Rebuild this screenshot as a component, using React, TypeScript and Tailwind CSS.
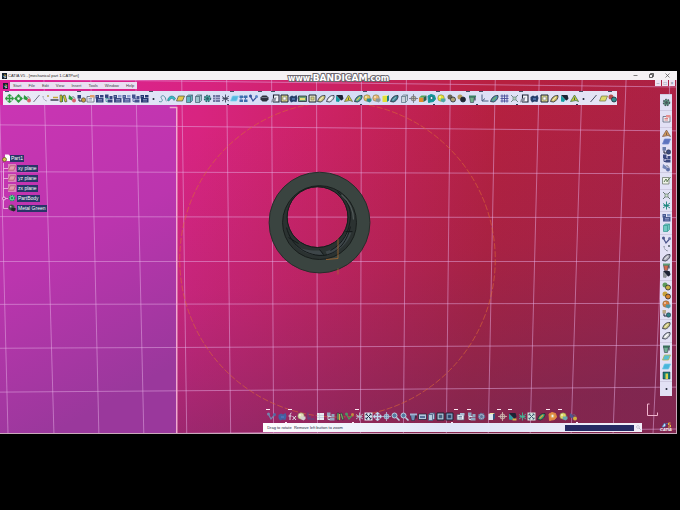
import type { ReactNode } from "react";
import clsx from "clsx";

type Shape =
  | "move" | "orbit" | "cone" | "line" | "curve" | "dash" | "books" | "link" | "sheet"
  | "blocks" | "tree" | "point" | "spline" | "arc" | "plane" | "box" | "gear" | "star"
  | "tiles" | "vee" | "hex" | "pad" | "frame" | "blob" | "photo" | "leaf" | "flip"
  | "tri" | "ball" | "cyl" | "sun" | "cube" | "ring" | "parts" | "cup" | "axes" | "grid"
  | "cross" | "fit" | "lens" | "fx" | "door" | "list" | "sketch";

type Tool = [shape: Shape, a?: string, b?: string];
type ToolGroup = { size: string; tools: Tool[]; mark?: boolean; drop?: boolean };

const INK = "#1d2334";
const NAVY = "#303f78";
const TEAL = "#169ba0";
const GREEN = "#2c9a3f";

const draw = (shape: Shape, a: string, b: string): ReactNode => {
  switch (shape) {
    case "move":
      return <path d="M9 0l4 4h-3v4h4V5l4 4-4 4v-3h-4v4h3l-4 4-4-4h3v-4H4v3L0 9l4-4v3h4V4H5z" fill={a} stroke={a} />;
    case "orbit":
      return <><path d="M9 0l5 5H4zM9 18l5-5H4zM0 9l5-5v10zM18 9l-5-5v10z" fill={a} /><circle cx="9" cy="9" r="4" fill="#eef6ee" stroke={a} strokeWidth="2.5" /></>;
    case "cone":
      return <><path d="M2 2l8 6-2 5-7-3z" fill={a} /><circle cx="12" cy="13" r="4" fill={b} /><path d="M9 4l5 5" stroke="#6b7280" strokeWidth="2" /></>;
    case "line":
      return <path d="M3 16L15 2" stroke={a} strokeWidth="2" />;
    case "curve":
      return <><path d="M4 4c0 6 4 10 9 10" fill="none" stroke={a} strokeWidth="1.5" strokeDasharray="3 2" /><circle cx="14" cy="4" r="2" fill={b} /></>;
    case "dash":
      return <><path d="M1 12h16" stroke={INK} strokeWidth="2.5" /><path d="M6 7h10" stroke={a} strokeWidth="3" /></>;
    case "books":
      return <><path d="M2 2h4v14H2zM8 3l4-1 4 13-4 1z" fill={a} stroke={INK} /><path d="M6 4h2v12H6z" fill={b} /></>;
    case "link":
      return <><rect x="1" y="2" width="7" height="7" fill={a} /><circle cx="13" cy="12" r="4.5" fill={b} stroke={INK} /><path d="M4 9v5h5" fill="none" stroke={INK} strokeWidth="2" /></>;
    case "sheet":
      return <><path d="M2 5h14v11H2z" fill="#eef0f6" stroke="#555d74" strokeWidth="1.5" /><path d="M8 2h9v5H8z" fill={a} /><path d="M5 9h7M5 12h7" stroke={b} strokeWidth="1.5" /></>;
    case "blocks":
      return <><path d="M1 2h7v7H1zM2 8h15v9H2z" fill={a} /><path d="M10 2h7v5h-7z" fill={b} /><path d="M6 11h8M6 14h8M3 5h3" stroke="#aab4de" strokeWidth="1.2" /></>;
    case "tree":
      return <><path d="M2 1h7v7H2zM11 4h6v6h-6zM7 11h10v6H7z" fill={a} /><path d="M4 7v8h4M4 9h7" fill="none" stroke={b} strokeWidth="2" /></>;
    case "point":
      return <circle cx="9" cy="10" r="2" fill={a} />;
    case "spline":
      return <path d="M2 15c7 2 8-2 5-6s2-8 6-4 1 8 4 9" fill="none" stroke={a} strokeWidth="2" />;
    case "arc":
      return <path d="M1 13C3 3 12 1 17 9l-3 4c-3-6-7-5-10 1z" fill={a} stroke="#25606f" />;
    case "plane":
      return <path d="M5 4h12l-4 10H1z" fill={a} stroke={b} strokeWidth="1.5" />;
    case "box":
      return <><path d="M3 5l4-3h8v11l-4 4H3z" fill={a} stroke={b} strokeWidth="1.5" /><path d="M3 5h8v12M11 5l4-3" fill="none" stroke={b} strokeWidth="1.5" /></>;
    case "gear":
      return <><circle cx="9" cy="9" r="6" fill={a} stroke={b} strokeWidth="3" strokeDasharray="3 2" /><circle cx="9" cy="9" r="3" fill={b} /></>;
    case "star":
      return <path d="M9 1v16M2 5l14 9M16 4L2 14M3 9h12" stroke={a} strokeWidth="1.8" />;
    case "tiles":
      return <><path d="M1 3h7v5H1zM10 3h7v5h-7zM1 11h7v5H1zM10 11h7v5h-7z" fill={a} /><path d="M4 8v3M13 8v3M8 6h2" stroke={b} strokeWidth="2" /></>;
    case "vee":
      return <><path d="M2 3l6 11 8-9" fill="none" stroke={a} strokeWidth="2.5" /><circle cx="3" cy="4" r="3" fill={a} /><circle cx="15" cy="5" r="3" fill={b} /></>;
    case "hex":
      return <><path d="M1 7l4-4h8l4 4v4l-4 4H5l-4-4z" fill={a} /><path d="M3 7h12" stroke={b} strokeWidth="1.5" /></>;
    case "pad":
      return <><path d="M5 2h11v14H5z" fill="#f4f5fa" stroke={INK} strokeWidth="2.2" /><path d="M0 17l2-7 9-4-2 8z" fill={a} /></>;
    case "frame":
      return <><path d="M2 2h14v14H2z" fill={a} stroke={INK} strokeWidth="2" /><path d="M6 6h6v6H6z" fill={b} stroke="#5c6058" /></>;
    case "blob":
      return <><path d="M1 6l5-3 4 2 5-3 2 6-2 8-6-1-5 2-3-5z" fill={a} /><path d="M6 8h6v4H6z" fill={b} /></>;
    case "photo":
      return <><path d="M1 4h16v11H1z" fill={a} stroke={INK} strokeWidth="1.5" /><path d="M4 8h10v4H4z" fill={b} /></>;
    case "leaf":
      return <><path d="M1 15C3 8 8 2 16 3c1 5-3 11-9 13z" fill={a} stroke={INK} strokeWidth="1.5" /><path d="M5 13l7-7" stroke={b} strokeWidth="2.5" /></>;
    case "flip":
      return <><path d="M2 2h13l2 7-4 5z" fill={INK} /><path d="M2 3l9 9-3 4-6-1z" fill={a} /><path d="M9 13h8v4H9z" fill={b} /></>;
    case "tri":
      return <><path d="M1 15L9 2l8 13-5-2z" fill={a} stroke={b} strokeWidth="1.5" /><path d="M9 7v5" stroke={b} strokeWidth="2" /></>;
    case "ball":
      return <><circle cx="8" cy="8" r="6.5" fill={a} stroke="#6b6b4a" /><path d="M8 9h9v5l-4 3-6-3z" fill={b} /><circle cx="6" cy="6" r="2" fill="#fff" opacity=".6" /></>;
    case "cyl":
      return <><path d="M3 4h9v12H3z" fill={a} /><path d="M12 4l4-2v11l-4 3z" fill={b} /><path d="M3 4l4-2h9l-4 2z" fill="#f4eda0" /></>;
    case "sun":
      return <><circle cx="9" cy="9" r="5" fill={a} stroke={b} strokeWidth="1.5" /><path d="M9 0v18M0 9h18" stroke={b} strokeWidth="1.5" /></>;
    case "cube":
      return <><path d="M2 7h9v9H2z" fill={a} /><path d="M2 7l5-4h10l-6 4z" fill="#4ea857" /><path d="M11 7l6-4v9l-6 4z" fill={b} /></>;
    case "ring":
      return <><path d="M2 4l6-3 7 2 2 7-4 5-6 1-4 1z" fill={a} stroke={a} strokeWidth="2" /><circle cx="9" cy="8" r="3" fill="#e8eefb" stroke={b} strokeWidth="1.5" /></>;
    case "parts":
      return <><circle cx="6" cy="6" r="5" fill={a} /><circle cx="12" cy="11" r="5" fill={b} stroke={INK} strokeWidth="1.5" /></>;
    case "cup":
      return <><path d="M3 6h10l-2 11H5z" fill={a} stroke={INK} /><path d="M2 3h14v4H2z" fill={b} /><path d="M14 7v6" stroke={INK} strokeWidth="2" /></>;
    case "axes":
      return <path d="M4 1v13h13M4 14l6-5" fill="none" stroke={a} strokeWidth="2" />;
    case "grid":
      return <path d="M1 4h16M1 9h16M1 14h16M4 1v16M9 1v16M14 1v16" stroke={a} strokeWidth="1.8" />;
    case "cross":
      return <><path d="M2 2l14 14M16 2L2 16" stroke={a} strokeWidth="1.5" /><path d="M6 6h6v6H6z" fill={b} stroke={a} /></>;
    case "fit":
      return <><path d="M1 1h16v16H1z" fill={a} /><path d="M4 4l10 10M14 4L4 14M4 7V4h3M11 4h3v3M14 11v3h-3M7 14H4v-3" fill="none" stroke={b} strokeWidth="2" /></>;
    case "lens":
      return <><circle cx="7" cy="7" r="5" fill={b} stroke={a} strokeWidth="2" /><path d="M11 11l6 6" stroke={a} strokeWidth="3" /></>;
    case "fx":
      return <path d="M7 2C4 2 4 5 4 16M1 8h6M9 8l7 8M16 8l-7 8" fill="none" stroke={a} strokeWidth="2" />;
    case "door":
      return <><path d="M2 2h14v14H2z" fill={a} stroke={INK} /><path d="M7 5h5v11H7z" fill={b} /></>;
    case "list":
      return <><path d="M2 2h14v14H2z" fill={a} /><path d="M2 7h14M2 11h14M7 2v14" stroke={b} strokeWidth="1.5" /></>;
    case "sketch":
      return <><path d="M1 3h13v13H1z" fill="#eef3e8" stroke={b} strokeWidth="1.5" /><path d="M4 12l4-6 3 5M9 12l8-10" fill="none" stroke={a} strokeWidth="2" /></>;
  }
};

const Icon = ({ tool: [shape, a = NAVY, b = "#8fa3d8"], className = "size-[9px]" }: { tool: Tool; className?: string }) => (
  <svg viewBox="0 0 18 18" className={className} aria-hidden="true">
    {draw(shape, a, b)}
  </svg>
);

const topGroups: ToolGroup[] = [
  { size: "flex-[71]", tools: [["move", GREEN], ["orbit", GREEN], ["cone", GREEN, "#d9626c"], ["line", "#6f6f86"], ["curve", "#77778c", "#b9a04b"], ["dash", "#c9a93c"], ["books", "#d6d431", "#3b8a46"], ["cone", GREEN, "#d9626c"]] },
  { size: "flex-[72]", tools: [["link", NAVY, "#c59a3e"], ["sheet", "#e0a070", "#7a86a8"], ["blocks", "#33427e", "#33427e"], ["tree", "#33427e", "#5fa3a8"], ["blocks", "#3a4a80", "#8f9fd0"], ["blocks", "#4d5c96", "#8f9fd0"], ["tree", "#43528e", "#5b6aa5"], ["blocks", "#24376f", "#24376f"]] },
  { size: "flex-[81]", drop: true, tools: [["point", INK], ["spline", "#5b93a3"], ["arc", "#35bcc4"], ["plane", "#e3c64b", "#4c5a4a"], ["box", "#5fb5c0", "#4a6577"], ["box", "#9fc5cc", "#4a6577"], ["gear", "#4fb0a6", "#2e5f6c"], ["list", "#7077a0", "#b8bde0"], ["star", "#3f465e"]] },
  { size: "flex-[28]", tools: [["plane", "#55b9e0", "#7fd0ee"], ["tiles", "#3e6fae", "#3e6fae"], ["vee", "#34509a", "#5f87c9"]] },
  { size: "flex-[13]", tools: [["hex", "#2d323f", "#8b93a5"]] },
  { size: "flex-[92]", drop: true, tools: [["pad", "#8d91a0"], ["frame", "#d5d18a", "#fff"], ["blob", "#27406c", "#4c6fa5"], ["photo", "#6da276", "#e6df7a"], ["frame", "#e4e3bd", "#d6d37e"], ["leaf", "#c8c17a", "#eeeab5"], ["leaf", "#d3d6dc", "#fff"], ["flip", TEAL, "#dfe3f7"], ["tri", "#d9cf3c", "#5d6d45"], ["leaf", "#3fa39a", "#d5c860"]] },
  { size: "flex-[74]", drop: true, tools: [["ball", "#e2c25d", "#2b8d8e"], ["ball", "#e7b770", "#8a9a9c"], ["cyl", "#dfe03a", "#1e7f87"], ["leaf", "#3b7f90", "#7fb1bb"], ["box", "#c9d5df", "#5e7486"], ["sun", "#c0bfa5", "#6c6c76"], ["cube", "#e28d2b", "#2f5f4b"], ["ring", "#129497", "#0f5c62"]] },
  { size: "flex-[30]", tools: [["ball", "#e6e334", "#4fa6a2"], ["parts", "#6b6550", "#b0a577"], ["parts", "#b49a5c", "#232733"]] },
  { size: "flex-[13]", drop: true, tools: [["cup", "#73b08a", "#3a7f62"]] },
  { size: "flex-[40]", drop: true, tools: [["axes", "#4a5f80"], ["leaf", "#4f96ad", "#76b26a"], ["grid", "#4a4f9a"], ["cross", "#4e6a62", "#b5cfc0"]] },
  { size: "flex-[60]", drop: true, tools: [["pad", "#8d91a0"], ["blob", "#27406c", "#4c6fa5"], ["frame", "#d5d18a", "#fff"], ["leaf", "#c8b35a", "#eeeab5"], ["flip", TEAL, "#dfe3f7"], ["tri", "#c9cf3c", "#3f6d45"]] },
  { size: "flex-[29]", tools: [["point", INK], ["line", "#4a4f60"], ["plane", "#dcdb6a", "#767a48"]] },
  { size: "flex-[9]", tools: [["parts", "#b5504f", "#2f8f8c"]] },
];

const sideGroups: ToolGroup[] = [
  { size: "flex-[15]", tools: [["gear", "#5f9a86", "#47575c"]] },
  { size: "flex-[15]", tools: [["sheet", "#e58f8f", "#d86060"]] },
  { size: "flex-[48]", tools: [["tri", "#d09a5a", "#7f5a4a"], ["plane", "#5d73bd", "#6f86cc"], ["link", "#6a7cab", "#3b4a7c"], ["tree", "#3a477e", "#3a477e"], ["cone", "#7385b8", "#5f70a8"]] },
  { size: "flex-[15]", tools: [["sketch", "#5f7a56", "#6b7668"]] },
  { size: "flex-[22]", tools: [["cross", "#3e5548", "#cfe0cf"], ["star", "#15837a"]] },
  { size: "flex-[22]", tools: [["blocks", "#48598f", "#8094c4"], ["box", "#6fcac2", "#3b9a94"]] },
  { size: "flex-[49]", tools: [["vee", "#4a548a", "#6f78aa"], ["curve", "#4f5a66", "#4f5a66"], ["leaf", "#a7a9b5", "#dadce4"], ["cup", "#cf6a4c", "#5d9a76"], ["flip", "#8b9095", "#e2e1f5"]] },
  { size: "flex-[40]", tools: [["parts", "#5c9a5b", "#c9b145"], ["parts", "#c7a13b", "#d9862d"], ["ball", "#d97e3c", "#4c94a7"], ["link", "#b9a987", "#2f7f83"]] },
  { size: "flex-[23]", tools: [["leaf", "#c3bd75", "#eeeab5"], ["leaf", "#c5c8ca", "#fff"]] },
  { size: "flex-[40]", tools: [["cup", "#6fae93", "#3a6f5b"], ["plane", "#58bfd4", "#b7b14b"], ["plane", "#49b5dc", "#6ec7e2"], ["door", "#177f78", "#dcd24b"]] },
  { size: "flex-[14]", tools: [["point", INK]] },
];

const viewGroups: ToolGroup[] = [
  { size: "flex-[22]", mark: true, drop: true, tools: [["vee", "#7483ad", "#5368a0"], ["blob", "#4460a0", "#4e70b5"]] },
  { size: "flex-[25]", mark: true, tools: [["fx", "#e0dfe6"], ["ball", "#e3ddb5", "#d3cfd0"], ["axes", "#564a86"]] },
  { size: "flex-[40]", drop: true, tools: [["list", "#e9ecf2", "#c2c9d6"], ["tree", "#93a5bb", "#c8d5df"], ["books", "#71a564", "#d9a34b"], ["vee", "#4b9860", "#c9893f"]] },
  { size: "flex-[99]", mark: true, drop: true, tools: [["star", "#b4bfd0"], ["fit", "#dce5ef", "#26324d"], ["move", "#c0dcf0"], ["sun", "#6f8cb0", "#b3c9df"], ["lens", "#bcd2e6", "#567aa0"], ["lens", "#bcd2e6", "#567aa0"], ["cup", "#6f8db5", "#9fb3d3"], ["photo", "#b5c7dd", "#557099"], ["box", "#b8cbdf", "#42587c"], ["frame", "#a8c2dc", "#3d5f8c"], ["frame", "#7e9dc7", "#223f74"]] },
  { size: "flex-[13]", mark: true, tools: [["sheet", "#a9bdd2", "#5a6f90"]] },
  { size: "flex-[30]", mark: true, tools: [["tree", "#8fa6be", "#d4e1ea"], ["gear", "#a5b5cc", "#5d7296"], ["cyl", "#dfe6ed", "#36547c"]] },
  { size: "flex-[11]", mark: true, tools: [["sun", "#8d5370", "#dac8b5"]] },
  { size: "flex-[39]", mark: true, tools: [["flip", "#2c9b9f", "#d3b044"], ["star", "#45b494"], ["fit", "#d4e3df", "#465c74"], ["leaf", "#3d9d6a", "#d9a540"]] },
  { size: "flex-[12]", mark: true, tools: [["ring", "#e18a44", "#dbb65e"]] },
  { size: "flex-[21]", mark: true, drop: true, tools: [["ball", "#ded865", "#68a9b0"], ["cone", "#4e568e", "#d1b23e"]] },
];

const menus = ["Start", "File", "Edit", "View", "Insert", "Tools", "Window", "Help"];

const treeNodes: { label: string; tool: Tool; plane?: boolean }[] = [
  { label: "xy plane", tool: ["plane", "#e39bb0", "#b0506a"], plane: true },
  { label: "yz plane", tool: ["plane", "#e39bb0", "#b0506a"], plane: true },
  { label: "zx plane", tool: ["plane", "#e39bb0", "#b0506a"], plane: true },
  { label: "PartBody", tool: ["gear", "#6fe09a", "#1f9a62"] },
  { label: "Metal Green", tool: ["ball", "#3a5046", "#1c2a26"] },
];

// [x at top, x at bottom] and [y at left, y at right] of each grid line
const columns = [[-1, 8], [44, 54], [91, 99], [136, 144], [182, 187], [227, 231], [272, 274], [317, 318], [362, 361], [407, 404], [451, 447], [496, 489], [540, 531], [583, 572], [627, 614], [671, 654]];
const rows = [[79, 87], [125, 131], [172, 174], [217, 218], [262, 262], [305, 304], [349, 346], [393, 388], [436, 430]];

const Scene = () => (
  <svg viewBox="0 80 677 354" preserveAspectRatio="none" className="absolute inset-0 size-full" aria-hidden="true">
    <defs>
      <linearGradient id="sky" x1="0" y1="0" x2="1" y2="0.05">
        <stop offset="0" stopColor="#df229c" />
        <stop offset="0.3" stopColor="#d82480" />
        <stop offset="0.5" stopColor="#cb2262" />
        <stop offset="0.74" stopColor="#b7203f" />
        <stop offset="1" stopColor="#ae2144" />
      </linearGradient>
      <linearGradient id="shade" gradientUnits="userSpaceOnUse" x1="200" y1="130" x2="250" y2="450">
        <stop offset="0" stopColor="#4f2c5c" stopOpacity="0" />
        <stop offset="0.5" stopColor="#4f2c5c" stopOpacity="0.14" />
        <stop offset="0.75" stopColor="#4f2c5c" stopOpacity="0.3" />
        <stop offset="1" stopColor="#4f2c5c" stopOpacity="0.48" />
      </linearGradient>
      <linearGradient id="panel" x1="0" y1="0" x2="0.3" y2="1">
        <stop offset="0" stopColor="#ca35b3" />
        <stop offset="0.5" stopColor="#bb35ae" />
        <stop offset="1" stopColor="#9a389c" />
      </linearGradient>
    </defs>
    <rect y="80" width="677" height="354" fill="url(#sky)" />
    <rect y="80" width="677" height="354" fill="url(#shade)" />
    <rect y="105" width="177" height="329" fill="url(#panel)" />
    <g stroke="#e6b0e6" strokeOpacity="0.5" fill="none">
      {columns.map(([top, bottom]) => <path key={top} d={`M${top} 80L${bottom} 434`} />)}
      {rows.map(([left, right]) => <path key={left} d={`M0 ${left}L677 ${right}`} />)}
    </g>
    <path d="M170 107.500h7V434" fill="none" stroke="#f0a9cf" strokeWidth="1.5" />
    <circle cx="338" cy="260" r="158" fill="none" stroke="#dc6a34" strokeOpacity="0.6" strokeDasharray="6 2" />

    <path fillRule="evenodd" d="M269.500 223a50.500 50.500 0 1 0 101 0a50.500 50.500 0 1 0-101 0zM287.500 217.500a30.500 30.500 0 1 1 61 0a30.500 30.500 0 1 1-61 0z" fill="#3a4440" stroke="#262d2a" />
    <path fillRule="evenodd" d="M283 223a37 37 0 1 0 74 0a37 37 0 1 0-74 0zM287.500 217.500a30.500 30.500 0 1 1 61 0a30.500 30.500 0 1 1-61 0z" fill="#2b3231" stroke="#181d1c" />
    <path d="M296 246c8 5 15 5 25 5l2 4c-10 2-19-1-27-9zM326 252c11-3 17-9 21-19h5c-4 11-12 19-24 23z" fill="#3e4649" />
    <g fill="none" stroke="#14191a">
      <path d="M287 228c4 16 17 28 36 28 14-1 24-12 28-29" />
      <path d="M338 192c9 7 13 15 13 25-1 15-7 27-20 34" />
      <path d="M289 238l10 6M320 250l4 5M346 232h7" />
    </g>
    <path d="M342 195c8 7 12 16 12 25" fill="none" stroke="#535b5a" strokeWidth="1.200" />
    <path d="M338.500 239v20l-12 1M338.500 269v6" fill="none" stroke="#a8682f" strokeOpacity="0.8" />
  </svg>
);

const ToolBar = ({ label, groups, light = false }: { label: string; groups: ToolGroup[]; light?: boolean }) => (
  <div role="toolbar" aria-label={label} className="flex">
    {groups.map((group, i) => (
      <div key={i} className={clsx("relative flex items-center justify-around pt-[3px] pb-[2px]", group.size)}>
        {(!light || group.mark) && (
          <span className={clsx("absolute top-0 left-0 h-px w-1", light ? "bg-pink-100" : "bg-slate-600")} />
        )}
        {group.drop && (
          <span className={clsx("absolute right-px bottom-0 h-px w-[2px]", light ? "bg-pink-100" : "bg-slate-700")} />
        )}
        {group.tools.map((tool, j) => (
          <button key={j} type="button" aria-label={tool[0]} className="min-w-0">
            <Icon tool={tool} />
          </button>
        ))}
      </div>
    ))}
  </div>
);

const SideBar = () => (
  <div role="toolbar" aria-label="Modeling" className="flex w-3 flex-1 flex-col bg-[#e2e1f5]">
    {sideGroups.map((group, i) => (
      <div key={i} className={clsx("flex min-h-0 flex-col items-center justify-around border-t border-[#cfcbe2] py-px", group.size)}>
        {group.tools.map((tool, j) => (
          <button key={j} type="button" aria-label={tool[0]} className="min-h-0">
            <Icon tool={tool} />
          </button>
        ))}
      </div>
    ))}
  </div>
);

const AppBadge = () => (
  <svg viewBox="0 0 10 12" className="h-[6px] w-[5px]" aria-hidden="true">
    <path d="M0 0h10v12H0z" fill="#15202e" />
    <path d="M5 2l4 3-4 1z" fill="#e6b93c" />
    <path d="M1 5l4 1v4z" fill="#4da6d8" />
    <path d="M5 6l4 2-4 3z" fill="#e9e9ee" />
  </svg>
);

const SpecTree = () => (
  <ul className="mt-12 ml-[2px] w-fit text-[5px] leading-[7px] text-white">
    <li className="flex h-[10px] items-center">
      <svg viewBox="0 0 16 18" className="h-[9px] w-2" aria-hidden="true">
        <path d="M6 1h7l3 3v10H6z" fill="#fff" />
        <circle cx="5" cy="11" r="4" fill="#d8c24a" stroke="#5f5a2c" strokeWidth="1.5" />
      </svg>
      <span className="bg-[#2a3468] px-px">Part1</span>
    </li>
    {treeNodes.map(({ label, tool, plane }, i) => (
      <li key={label} className="flex h-[10px] items-center">
        <svg viewBox="0 0 6 10" className="h-[10px] w-[6px]" aria-hidden="true">
          <path d={i < 4 ? "M1.500 0v10M1.500 5.500H6" : "M1.500 0v5.500H6"} fill="none" stroke="#f0c3e6" strokeOpacity="0.8" />
          {i === 3 && <circle cx="2" cy="5.500" r="1.500" fill="#b834ac" stroke="#f0c3e6" />}
        </svg>
        <span className={clsx("flex size-2 items-center justify-center", plane && "bg-[#d987bd]")}>
          <Icon tool={tool} className="size-2" />
        </span>
        <span className="ml-px bg-[#2a3468] px-px">{label}</span>
      </li>
    ))}
  </ul>
);

const TitleBar = () => (
  <header className="relative z-10 flex h-[9px] shrink-0 items-center bg-[#f5f2f4] px-[2px]">
    <AppBadge />
    <h1 className="ml-px text-[4px] leading-[6px] text-neutral-800">CATIA V5 - [mechanical part 1.CATPart]</h1>
    <div className="mr-[5px] ml-auto flex gap-[11px]">
      <button type="button" aria-label="Minimize">
        <svg viewBox="0 0 10 10" className="size-[5px]"><path d="M1 5h8" stroke="#555" strokeWidth="1.500" /></svg>
      </button>
      <button type="button" aria-label="Restore">
        <svg viewBox="0 0 10 10" className="size-[5px]"><path d="M1 3h6v6H1zM3 3V1h6v6H7" fill="none" stroke="#333" strokeWidth="1.500" /></svg>
      </button>
      <button type="button" aria-label="Close">
        <svg viewBox="0 0 10 10" className="size-[5px]"><path d="M1 1l8 8M9 1L1 9" stroke="#555" strokeWidth="1.500" /></svg>
      </button>
    </div>
    <p className="absolute top-px left-1/2 flex -translate-x-1/2 items-baseline font-['DejaVu_Sans','Liberation_Sans',sans-serif] leading-[12px] font-bold text-white [paint-order:stroke_fill] [-webkit-text-stroke:2px_#6a666e]">
      <span className="text-[8px]">www.</span>
      <span className="text-[9px]">BANDICAM</span>
      <span className="text-[8px]">.com</span>
    </p>
  </header>
);

export default function App() {
  return (
    <div className="flex h-screen flex-col bg-black pt-[71px] pr-[3px] pb-[76px] font-['Liberation_Sans',sans-serif]">
      <TitleBar />
      <main className="relative flex min-h-0 flex-1 flex-col border-r border-b border-[#c9a9bb]">
        <Scene />
        <div className="relative flex items-start">
          <div className="mt-[2px] flex items-center gap-[2px] pl-[3px]">
            <AppBadge />
            <nav className="flex h-[7px] items-center gap-[7px] bg-[#eadff2] px-[3px] text-[4px] leading-[6px] text-neutral-700">
              {menus.map((menu) => (
                <button key={menu} type="button">{menu}</button>
              ))}
            </nav>
          </div>
          <div className="mr-px ml-auto flex gap-px">
            {["–", "□", "×"].map((sign) => (
              <button key={sign} type="button" className="size-[6px] bg-[#eee3f3] text-[5px] leading-[6px] text-slate-500">{sign}</button>
            ))}
          </div>
        </div>

        <div className="relative flex min-h-0 flex-1">
          <div className="flex min-w-0 flex-1 flex-col pt-[2px]">
            <div className="mr-[25px] ml-[3px] bg-linear-to-r from-[#eceaf7] via-[#d3dcf6] to-[#e6e4f5] pl-[2px]">
              <ToolBar label="Standard" groups={topGroups} />
            </div>
            <SpecTree />
            <div className="mt-auto mr-[63px] ml-[41.500%]">
              <ToolBar label="View" groups={viewGroups} light />
            </div>
            <footer className="mb-px ml-[41%] flex h-[9px] items-center bg-linear-to-r from-white via-[#dfe4f8] to-[#f1eef8] pl-1">
              <label htmlFor="command" className="flex-1 whitespace-pre text-[4px] leading-[6px] text-slate-800">Drag to rotate  Remove left button to zoom</label>
              <input id="command" className="h-[6px] w-[69px] bg-[#252a63] text-[4px] text-white outline-none" />
              <button type="button" aria-label="Search" className="flex w-2 justify-center">
                <Icon tool={["lens", "#a9a9be", "#f4f2fa"]} className="size-[5px]" />
              </button>
            </footer>
          </div>

          <aside className="flex w-[34px] shrink-0 flex-col items-end pt-[5px] pr-1">
            <SideBar />
            <svg viewBox="0 0 28 36" className="mt-1 mr-auto ml-[4px] h-[18px] w-[14px]" aria-hidden="true">
              <path d="M7 8H3v23h20v-6" fill="none" stroke="#f0b3cd" strokeWidth="2" />
            </svg>
            <div className="mt-1 mb-px flex flex-col items-center text-[4px] leading-[4px] font-bold text-white italic">
              <svg viewBox="0 0 22 12" className="h-[6px] w-[11px]" aria-hidden="true">
                <path d="M2 10L7 2l3 4-3 4zM10 3h5" fill="#c9e1f4" stroke="#3d77b5" strokeWidth="1.500" />
                <path d="M19 2h-4v4h4v4h-5" fill="none" stroke="#e3b53e" strokeWidth="2" />
              </svg>
              CATIA
            </div>
          </aside>
        </div>
      </main>
    </div>
  );
}
